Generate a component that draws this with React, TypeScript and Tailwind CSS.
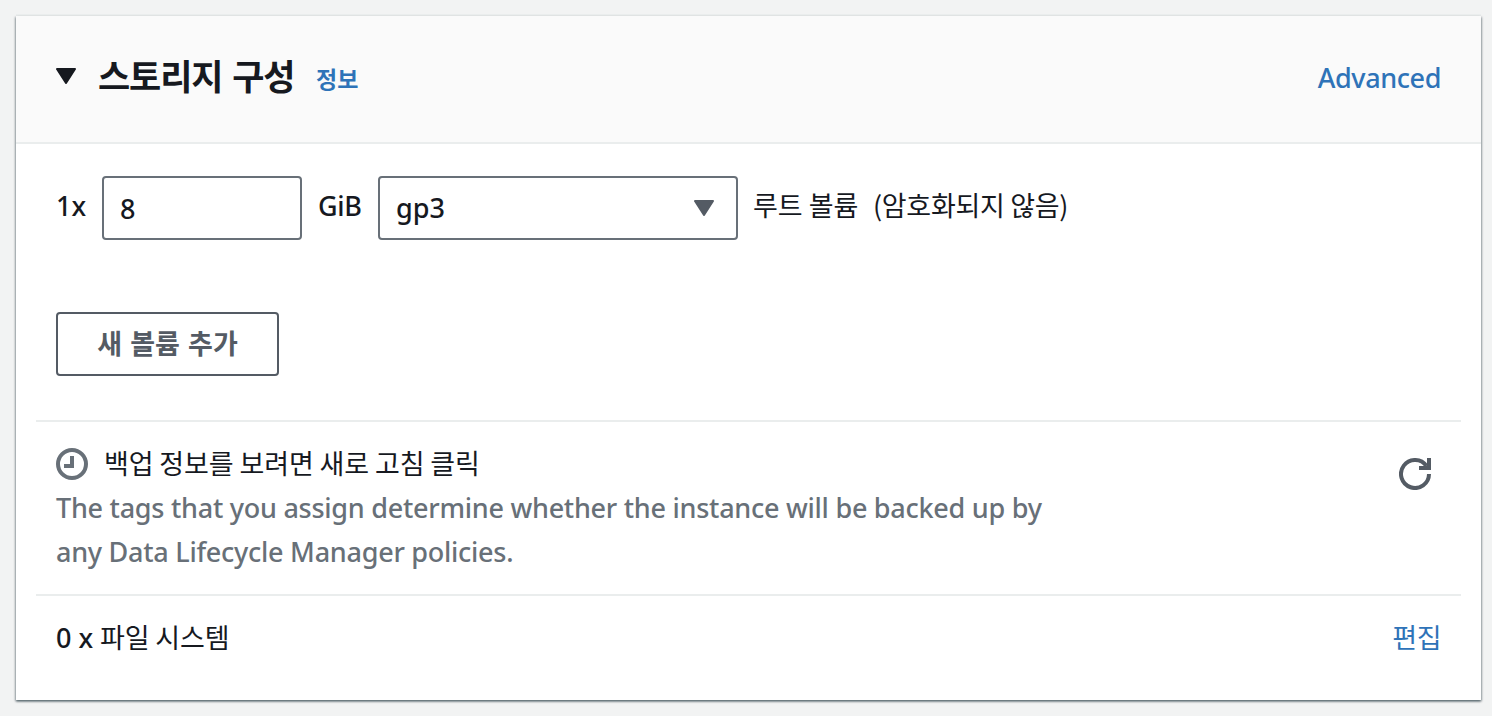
import React, { useState } from 'react';

const LATIN = "font-['Noto_Sans','Noto_Sans_CJK_KR',sans-serif]";
const KOREAN = "font-['Noto_Sans_CJK_KR',sans-serif]";

function Caret({ className }: { className?: string }) {
  return (
    <svg viewBox="0 0 20 16" className={`h-4 w-5 ${className ?? ''}`} aria-hidden="true">
      <path d="M1 1h18L10 15z" fill="currentColor" stroke="currentColor" strokeWidth="2" strokeLinejoin="round" />
    </svg>
  );
}

function ClockIcon() {
  return (
    <svg viewBox="0 0 32 32" className="h-8 w-8 text-[#687078]" fill="none" stroke="currentColor" strokeWidth="4" aria-hidden="true">
      <circle cx="16" cy="16" r="14" />
      <path d="M16 8v10H8" />
    </svg>
  );
}

function RefreshIcon() {
  return (
    <svg viewBox="0 0 32 32" className="h-8 w-8" fill="none" stroke="currentColor" strokeWidth="4" aria-hidden="true">
      <path d="M30 16A14 14 0 1 1 27.5 8" />
      <path d="M30 0v10H20" />
    </svg>
  );
}

export default function App() {
  const [size, setSize] = useState('8');

  return (
    <div className={`h-[716px] w-[1492px] overflow-hidden bg-[#f2f3f3] pt-4 pl-4 text-[#16191f] ${LATIN}`}>
      <div className="flex h-[684px] w-[1465px] flex-col bg-white shadow-[0_2px_2px_0_rgba(0,28,36,0.3),1px_1px_2px_0_rgba(0,28,36,0.3),-1px_1px_2px_0_rgba(0,28,36,0.3),0_-2px_0_0_#eaeded]">
        {/* Header */}
        <div className="flex h-32 items-center justify-between border-b-2 border-[#eaeded] bg-[#fafafa] px-10">
          <div className="flex items-center whitespace-nowrap">
            <Caret className="-mt-1.5" />
            <h2 className={`-mt-2 ml-[22px] w-[218px] text-[35px] leading-[44px] font-bold tracking-[-1.1px] [word-spacing:3px] ${KOREAN}`}>스토리지 구성</h2>
            <a className={`-mt-0.5 text-[23px] leading-8 font-bold text-[#2e73b8] ${KOREAN}`}>정보</a>
          </div>
          <a className="-mt-0.5 text-[27px] leading-9 font-medium tracking-[-0.4px] whitespace-nowrap text-[#2e73b8]">Advanced</a>
        </div>

        {/* Root volume */}
        <div className="flex items-center px-10 pt-8 text-[27px] leading-9 font-medium whitespace-nowrap">
          <span className="-mt-1 w-[46px]">1x</span>
          <input
            value={size}
            onChange={(e) => setSize(e.target.value)}
            className="h-16 w-[200px] rounded-[4px] border-2 border-[#687078] bg-white px-4 outline-none"
          />
          <span className="-mt-1 w-[76px] pl-4 tracking-[-0.3px]">GiB</span>
          <button type="button" className="flex h-16 w-[360px] items-center justify-between rounded-[4px] border-2 border-[#687078] px-4 pr-[22px]">
            <span>gp3</span>
            <Caret className="text-[#545b64]" />
          </button>
          <span className={`-mt-1.5 ml-[15px] w-[120px] text-[27px] font-normal ${KOREAN}`}>루트 볼륨</span>
          <span className={`-mt-1.5 text-[27px] font-normal tracking-[-0.3px] ${KOREAN}`}>(암호화되지 않음)</span>
        </div>

        <div className="px-10 pt-[72px]">
          <button type="button" className={`h-16 w-[223px] rounded-[4px] border-2 border-[#545b64] pb-0.5 text-[27px] font-bold text-[#545b64] [word-spacing:2px] ${KOREAN}`}>
            새 볼륨 추가
          </button>
        </div>

        {/* Backup info */}
        <div className="mx-5 mt-11 flex h-[174px] justify-between border-t-2 border-[#eaeded] pt-5 pr-[30px] pl-5">
          <div className="whitespace-nowrap">
            <div className="flex h-11 items-center gap-4">
              <ClockIcon />
              <span className={`-mt-0.5 text-[27px] leading-9 tracking-[-0.12px] ${KOREAN}`}>백업 정보를 보려면 새로 고침 클릭</span>
            </div>
            <p className="text-[27px] leading-[44px] font-medium tracking-[-0.26px] text-[#687078]">
              The tags that you assign determine whether the instance will be backed up by
              <br />
              any Data Lifecycle Manager policies.
            </p>
          </div>
          <button type="button" className="mt-4 h-8 text-[#545b64]" aria-label="Refresh">
            <RefreshIcon />
          </button>
        </div>

        {/* File systems */}
        <div className="mx-5 flex items-start justify-between border-t-2 border-[#eaeded] px-5 pt-5 text-[27px] leading-[44px] whitespace-nowrap">
          <div className="flex">
            <span className="w-11 font-medium">0 x</span>
            <span className={`-mt-px tracking-[-0.15px] ${KOREAN}`}>파일 시스템</span>
          </div>
          <a className={`-mt-px tracking-[-0.5px] text-[#2e73b8] ${KOREAN}`}>편집</a>
        </div>
      </div>
    </div>
  );
}
